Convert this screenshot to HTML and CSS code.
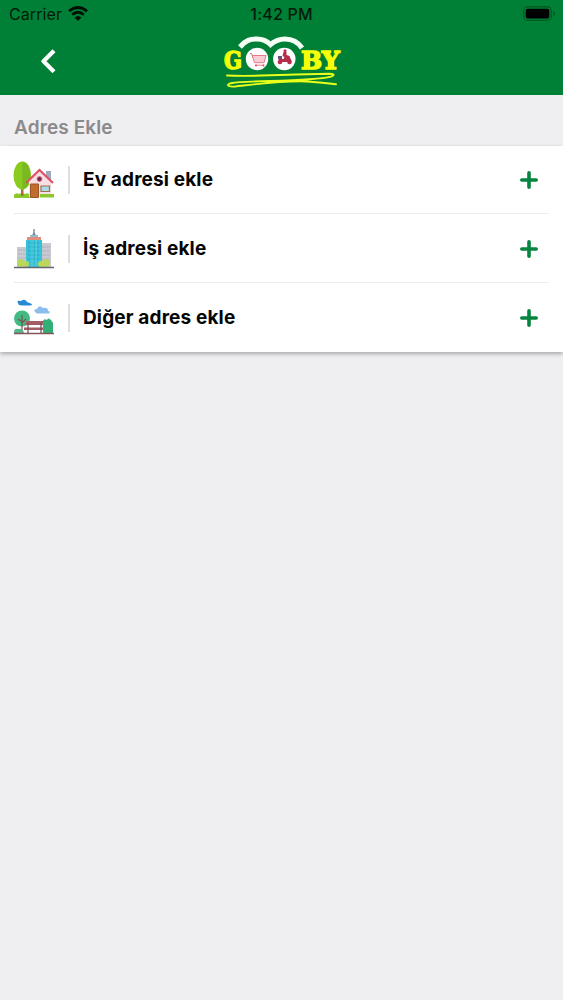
FILE: index.html
```html
<!DOCTYPE html>
<html lang="tr">
<head>
<meta charset="utf-8">
<meta name="viewport" content="width=device-width, initial-scale=1">
<title>Gooby</title>
<link rel="stylesheet" href="styles.css">
</head>
<body>
<header class="header">
  <div class="status">
    <div class="carrier"><span>Carrier</span>
      <svg class="wifi" viewBox="0 0 20 15" width="20" height="15"><g fill="none" stroke="currentColor" stroke-width="2.7"><path d="M1 5.2Q10-2.2 19 5.2"/><path d="M4.2 8.7Q10 3.8 15.8 8.7"/></g><path d="M6.6 11.5Q10 8.5 13.4 11.5L10 15Z" fill="currentColor"/></svg>
    </div>
    <span class="time">1:42 PM</span>
    <svg class="battery" viewBox="0 0 33 16" width="33" height="16"><rect x=".7" y=".9" width="27.6" height="13.4" rx="3.8" fill="none" stroke="#00561f" stroke-width="1.1"/><rect x="2.7" y="2.8" width="23.6" height="9.6" rx="2" fill="#000"/><path d="M30 5.2q2 .7 2 2.4t-2 2.4Z" fill="#00561f"/></svg>
  </div>
  <div class="navbar">
    <button class="back" aria-label="Geri"><svg viewBox="0 0 16 24" width="16" height="24"><path d="M12.500 3.200 3.500 12.200 12.500 21.200" fill="none" stroke="#fff" stroke-width="4.200" stroke-linecap="square" stroke-linejoin="round"/></svg></button>
    <svg class="logo" viewBox="222 34 120 56" width="120" height="56">
      <path d="M240 47C246 40 250 39 257 39Q265 39 270.5 44.500Q277 39 285 39Q296 39 302 48" fill="none" stroke="#f6fff6" stroke-width="5"/>
      <circle cx="257" cy="59" r="11.200" fill="#fff"/><circle cx="284.300" cy="59" r="11.200" fill="#fff"/>
      <path d="M250 53.500h1.500l3 9.200h9.500l2-7.200h-14" fill="#f9cdd3" stroke="#e77984" stroke-width="1"/>
      <path d="M255 65.200h9" stroke="#e77984" stroke-width="1"/>
      <circle cx="256" cy="65.600" r="1" fill="#d84d60"/><circle cx="263.500" cy="65.600" r="1" fill="#d84d60"/>
      <circle cx="280" cy="62" r="2.300" fill="#b52d49"/><circle cx="289.500" cy="62" r="2.300" fill="#b52d49"/>
      <path d="M278.500 59h5l1-2-2-1 1-4h3v3l3 1 2 5-4 1h-8Z" fill="#b52d49"/>
      <circle cx="285" cy="50.800" r="1.500" fill="#b52d49"/>
      <path d="M278 56h4v3h-4z" fill="#65507a"/>
      <g class="wordmark"><text x="224" y="68.600" textLength="18" lengthAdjust="spacingAndGlyphs">G</text><text x="301" y="68.600" textLength="38.500" lengthAdjust="spacingAndGlyphs">BY</text></g>
      <path d="M227 75.500C258 77 298 73.800 329 73.800Q337 74 331 76.600C309 82 248 80 231 83.200C225 85 229 87 235 86.500C257 84 282 80.500 307 81.500Q323 82.500 336 84.300" fill="none" stroke="#e8ff19" stroke-width="1.900" stroke-linecap="round"/>
    </svg>
  </div>
</header>
<main>
  <h1 class="title">Adres Ekle</h1>
  <div class="list">
    <div class="item">
      <svg class="picture" viewBox="0 0 42 40" width="42" height="40"><path d="M1 35q2-3 5-1 3-2 6 0 3-2 5 1v3H1ZM27 34h14v3.500H27Z" fill="#8bca2b"/><path d="M8 24h2.500v12H8Z" fill="#ad6c38"/><ellipse cx="9.300" cy="15.500" rx="8.800" ry="14" fill="#8acb20"/><path d="M9.300 1.500q8 2 8 14t-8 14Z" fill="#79b922"/><path d="M33 11h5v9h-5Z" fill="#9daabb"/><path d="M16 21 27 11l11 10v13H27v3H16Z" fill="#f7dfe5"/><path d="m13 23 13.500-13L40 23" fill="none" stroke="#df5366" stroke-width="2.300"/><path d="M17.500 24h8v13.500h-8Z" fill="#bf6c2d" stroke="#9c542b"/><path d="M28 26h8.500v5.500H28Z" fill="#a8dce8" stroke="#a86b49" stroke-width="1.200"/><circle cx="26.500" cy="19" r="2.300" fill="#65324e" stroke="#d44660"/></svg>
      <span class="label ev">Ev adresi ekle</span>
      <svg class="plus" viewBox="0 0 18 18" width="18" height="18"><path d="M9 1.800v14.400M1.800 9h14.400"/></svg>
    </div>
    <div class="item second">
      <svg class="picture" viewBox="0 0 42 40" width="42" height="40"><path d="M4 18h11v20H4ZM28 14h10v24H28Z" fill="#c9c9d1"/><path d="M5 21h8M5 25h8M5 29h8M29 18h8M29 22h8M29 26h8M29 30h8" stroke="#aeb5c0" stroke-width="1.500" stroke-dasharray="1.500 1"/><path d="M21 0v5" stroke="#718297" stroke-width="1.300"/><path d="M18.500 7 21 3l2.500 4Z" fill="#6c8ba7"/><path d="M17 6h8v3h-8Z" fill="#94b9ca"/><path d="M14 8h14v3H14Z" fill="#e28c7b"/><path d="M13 11h16v27H13Z" fill="#39c2d7"/><path d="M15 14h12M15 18h12M15 22h12M15 26h12M15 30h12" stroke="#28aac8" stroke-width="1.500" stroke-dasharray="2 1"/><path d="M19 11v27M23 11v27" stroke="#71d5e0" stroke-width=".7"/><g fill="#b9d75b"><circle cx="8" cy="34" r="4"/><circle cx="13" cy="35" r="3"/><circle cx="28" cy="35" r="3"/><circle cx="33" cy="34" r="4"/></g><path d="M1 38.500h40" stroke="#65666c" stroke-width="1.500"/></svg>
      <span class="label is">İş adresi ekle</span>
      <svg class="plus" viewBox="0 0 18 18" width="18" height="18"><path d="M9 1.800v14.400M1.800 9h14.400"/></svg>
    </div>
    <div class="item">
      <svg class="picture" viewBox="0 0 42 40" width="42" height="40"><path d="M5 5Q3 2 8 3q4-3 6 1l5 2q0 1.500-2 1.500H9Q5 7.500 5 5Z" fill="#288ad4"/><path d="M22 14q-2-3 2-3 2-5 6-1 5-1 5 3 3 0 1 2.500H24Z" fill="#8bbcec"/><circle cx="9" cy="20.500" r="8" fill="#41bb82"/><path d="M9 17v18M9 25l4-4M9 24l-4-3" stroke="#775252" stroke-width="1.200"/><path d="M13 23h18v4H12ZM11 29.500h21v2.500H11Z" fill="#a45d65"/><path d="M15 25v10M28 25v10" stroke="#694b59" stroke-width="1.200"/><path d="M30 35V23q1-3 4-1 1-3 4 0l2 3v10Z" fill="#32af76"/><path d="M1 35q0-5 4-4 5-1 6 4Z" fill="#54b78b"/><path d="M1 35.500h40" stroke="#825455" stroke-width="1.300"/></svg>
      <span class="label diger">Diğer adres ekle</span>
      <svg class="plus" viewBox="0 0 18 18" width="18" height="18"><path d="M9 1.800v14.400M1.800 9h14.400"/></svg>
    </div>
  </div>
</main>
</body>
</html>
```
FILE: styles.css
```css
* { box-sizing: border-box; }
body { margin: 0; min-height: 1000px; background: #efeef0; font-family: Inter, "Liberation Sans", sans-serif; }
.header { height: 95px; background: #008037; }
.status { height: 28px; padding: 0 7px 0 9px; display: grid; grid-template-columns: 1fr auto 1fr; align-items: center; color: #001b08; font-size: 16px; }
.carrier { display: flex; align-items: center; gap: 6px; letter-spacing: .1px; }
.wifi { margin-top: -2px; color: #001000; }
.time { margin-right: 2px; font-weight: 500; letter-spacing: .2px; }
.battery { justify-self: end; }
.navbar { display: grid; grid-template-columns: 1fr 120px 1fr; padding: 6px 0 0; }
.back { width: 16px; height: 24px; margin: 15px 0 0 39.5px; padding: 0; border: 0; background: none; }
.back svg, .logo { display: block; }
.logo { margin-left: .5px; }
.wordmark { fill: #f5ff08; stroke: #f5ff08; stroke-width: 1.5px; font-family: "DejaVu Serif", serif; font-size: 25px; font-weight: 700; }
.title { height: 51px; margin: 0; padding: 21px 14px 0; color: #8a8a8d; font-size: 19px; line-height: 24px; font-weight: 600; letter-spacing: .12px; }
.list { background: #fff; padding: 0 14px; box-shadow: 0 2px 4px #aaa9ad; }
.item { height: 69px; display: flex; align-items: center; border-bottom: 1px solid #ececef; }
.item:first-child { height: 68px; }
.second { padding-top: 2px; }
.item:last-child { border: 0; }
.picture { flex: none; width: 42px; margin: 0 13px 0 -1px; }
.label { flex: 1; height: 28px; border-left: 2px solid #dedee0; padding-left: 13px; color: #050505; font-size: 19px; line-height: 27px; font-weight: 650; }
.ev { letter-spacing: .14px; }
.is { letter-spacing: .16px; }
.diger { letter-spacing: .15px; }
.plus { margin-right: 11px; fill: none; stroke: #078440; stroke-width: 3.6; stroke-linecap: round; }
```
